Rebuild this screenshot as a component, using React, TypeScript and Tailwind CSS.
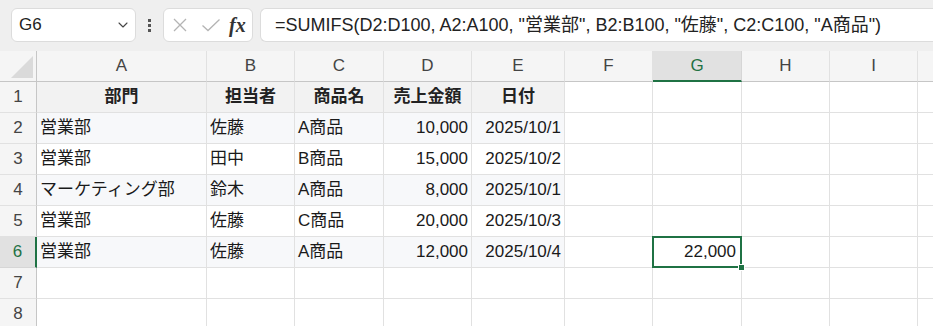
import { ChevronDown } from 'lucide-react';

const columns = ['A', 'B', 'C', 'D', 'E', 'F', 'G', 'H', 'I', 'J'];

const headers = ['部門', '担当者', '商品名', '売上金額', '日付'];

const rows = [
    ['営業部', '佐藤', 'A商品', '10,000', '2025/10/1'],
    ['営業部', '田中', 'B商品', '15,000', '2025/10/2'],
    ['マーケティング部', '鈴木', 'A商品', '8,000', '2025/10/1'],
    ['営業部', '佐藤', 'C商品', '20,000', '2025/10/3'],
    ['営業部', '佐藤', 'A商品', '12,000', '2025/10/4'],
];

const gridCols =
    'grid w-[1006px] grid-cols-[37px_170px_88px_89px_88px_93px_88px_89px_88px_88px_88px]';

function RowHeader({ n, active }: { n: number; active?: boolean }) {
    return (
        <div
            className={
                active
                    ? 'flex h-[31px] items-center justify-center border-b border-r-2 border-b-[#d6d6d6] border-r-[#1f7244] bg-[#e1e1e1] text-[17px] text-[#1f7244]'
                    : 'flex h-[31px] items-center justify-center border-b border-r border-b-[#e1e1e1] border-r-[#c6c6c6] bg-[#f5f5f5] text-[17px] text-[#444]'
            }
        >
            {n}
        </div>
    );
}

function Cell({
    children,
    className = '',
}: {
    children?: React.ReactNode;
    className?: string;
}) {
    return (
        <div
            className={`flex h-[31px] items-center overflow-visible whitespace-nowrap border-b border-r border-[#e1e1e1] px-[3px] text-[17px] text-[#1a1a1a] ${className}`}
        >
            {children}
        </div>
    );
}

export default function App() {
    return (
        <div className="h-[326px] w-[933px] overflow-hidden bg-white font-['Liberation_Sans','Noto_Sans_CJK_JP',sans-serif]">
            {/* Formula bar */}
            <div className="flex h-[51px] items-start bg-[#efefef] pl-[11px] pt-[8px]">
                <div className="flex h-[34px] w-[125px] items-center justify-between rounded-md border border-[#dcdcdc] bg-white pl-[7px] pr-[4px]">
                    <span className="text-[17px] text-[#222]">G6</span>
                    <ChevronDown className="h-4 w-4 text-[#444]" strokeWidth={1.6} />
                </div>
                <div className="flex h-[34px] w-[27px] flex-col items-center justify-center gap-[2px]">
                    <span className="h-[3px] w-[3px] bg-[#555]" />
                    <span className="h-[3px] w-[3px] bg-[#555]" />
                    <span className="h-[3px] w-[3px] bg-[#555]" />
                </div>
                <div className="flex h-[34px] w-[90px] items-center rounded-md border border-[#dcdcdc] bg-white pl-[8px]">
                    <svg width="16" height="16" viewBox="0 0 16 16" className="mr-[13px]">
                        <path d="M2 2 L14 14 M14 2 L2 14" stroke="#b4b4b4" strokeWidth="1.3" fill="none" />
                    </svg>
                    <svg width="20" height="14" viewBox="0 0 20 14" className="mr-[8px]">
                        <path d="M1.5 7.5 L7 12.5 L18.5 1.5" stroke="#b4b4b4" strokeWidth="1.3" fill="none" />
                    </svg>
                    <span className="font-['Liberation_Serif',serif] text-[20px] font-bold italic leading-none text-[#333]">
                        fx
                    </span>
                </div>
                <div className="ml-[7px] flex h-[34px] flex-1 items-center rounded-l-md border border-r-0 border-[#dcdcdc] bg-white pl-[14px]">
                    <span className="whitespace-nowrap text-[18px] text-[#222]">
                        =SUMIFS(D2:D100, A2:A100, "営業部", B2:B100, "佐藤", C2:C100, "A商品")
                    </span>
                </div>
            </div>

            {/* Column headers */}
            <div className={gridCols}>
                <div className="relative h-[31px] border-b border-r border-b-[#c6c6c6] border-r-[#c6c6c6] bg-[#f5f5f5]">
                    <div className="absolute bottom-[3px] right-[3px] h-0 w-0 border-b-[22px] border-l-[22px] border-b-[#dadada] border-l-transparent" />
                </div>
                {columns.map((c) =>
                    c === 'G' ? (
                        <div
                            key={c}
                            className="flex h-[31px] items-center justify-center border-b-2 border-r border-b-[#1f7244] border-r-[#d6d6d6] bg-[#e1e1e1] text-[17px] text-[#1f7244]"
                        >
                            {c}
                        </div>
                    ) : (
                        <div
                            key={c}
                            className="flex h-[31px] items-center justify-center border-b border-r border-b-[#c6c6c6] border-r-[#e1e1e1] bg-[#f5f5f5] text-[17px] text-[#444]"
                        >
                            {/* J falls past the window edge, so leave its label out */}
                            {c === 'J' ? null : c}
                        </div>
                    ),
                )}
            </div>

            {/* Row 1: table header */}
            <div className={gridCols}>
                <RowHeader n={1} />
                {headers.map((h) => (
                    <Cell key={h} className="justify-center bg-[#f2f2f2] font-bold text-[#222]">
                        {h}
                    </Cell>
                ))}
                {columns.slice(5).map((c) => (
                    <Cell key={c} />
                ))}
            </div>

            {/* Data rows */}
            {rows.map((r, i) => {
                const n = i + 2;
                const stripe = n % 2 === 0 ? 'bg-[#f7f8fa]' : 'bg-white';
                return (
                    <div key={n} className={gridCols}>
                        <RowHeader n={n} active={n === 6} />
                        <Cell className={stripe}>{r[0]}</Cell>
                        <Cell className={stripe}>{r[1]}</Cell>
                        <Cell className={stripe}>{r[2]}</Cell>
                        <Cell className={`justify-end ${stripe}`}>{r[3]}</Cell>
                        <Cell className={`justify-end ${stripe}`}>{r[4]}</Cell>
                        <Cell />
                        {n === 6 ? (
                            <Cell className="relative justify-end pr-[5px]">
                                22,000
                                <div className="absolute -left-[1px] -top-[1px] h-[32px] w-[90px] border-2 border-[#1f7244]" />
                                <div className="absolute -bottom-[4px] -right-[4px] h-[7px] w-[7px] border border-white bg-[#1f7244]" />
                            </Cell>
                        ) : (
                            <Cell />
                        )}
                        <Cell />
                        <Cell />
                        <Cell />
                    </div>
                );
            })}

            {/* Empty rows */}
            {[7, 8].map((n) => (
                <div key={n} className={gridCols}>
                    <RowHeader n={n} />
                    {columns.map((c) => (
                        <Cell key={c} />
                    ))}
                </div>
            ))}
        </div>
    );
}
